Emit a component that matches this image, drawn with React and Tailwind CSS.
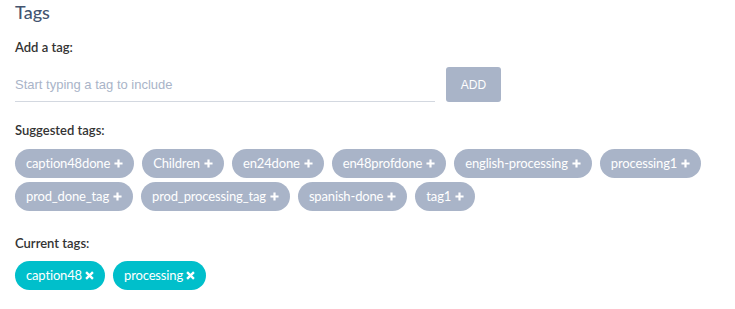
import React, { useState } from 'react';

const suggested = [
  'caption48done', 'Children', 'en24done', 'en48profdone', 'english-processing', 'processing1',
  'prod_done_tag', 'prod_processing_tag', 'spanish-done', 'tag1',
];
const current = ['caption48', 'processing'];

function PlusIcon() {
  return (
    <svg viewBox="0 0 10 10" className="w-[9px] h-[9px] ml-[4px]" fill="none" stroke="currentColor" strokeWidth="2.4">
      <path d="M5 0.5v9M0.5 5h9" />
    </svg>
  );
}

function XIcon() {
  return (
    <svg viewBox="0 0 10 10" className="w-[9px] h-[9px] ml-[3px]" fill="none" stroke="currentColor" strokeWidth="2.6">
      <path d="M1.2 1.2l7.6 7.6M8.8 1.2l-7.6 7.6" />
    </svg>
  );
}

export default function App() {
  const [value, setValue] = useState('');

  return (
    <div className="w-[735px] h-[309px] bg-white px-[15px] pt-0 text-[13px] font-['Lato','Noto_Sans',sans-serif]">
      <h2 className="text-[18px] leading-[24px] font-medium text-[#44546f]">Tags</h2>

      <p className="mt-[14px] text-[13px] leading-[18px] font-semibold text-[#333]">Add a tag:</p>

      {/* Input row */}
      <div className="flex items-center mt-[11px] w-[486px]">
        <input
          value={value}
          onChange={e => setValue(e.target.value)}
          placeholder="Start typing a tag to include"
          className="w-[420px] h-[35px] border-b border-[#d3d8e0] outline-none text-[13px] text-[#333] placeholder:text-[#a9b4c8] font-['Liberation_Sans',sans-serif]"
        />
        <button className="ml-[11px] w-[55px] h-[35px] rounded-[3px] bg-[#a9b4c8] text-white text-[12px] font-['Liberation_Sans',sans-serif]">
          ADD
        </button>
      </div>

      <p className="mt-[19px] text-[13px] leading-[18px] font-semibold text-[#333]">Suggested tags:</p>

      <div className="mt-[10px] flex flex-wrap gap-x-[8px] gap-y-[4px] w-[710px]">
        {suggested.map(t => (
          <span key={t} className="h-[29px] px-[11px] rounded-full bg-[#a9b4c8] text-white text-[13px] tracking-[-0.15px] flex items-center">
            {t}<PlusIcon />
          </span>
        ))}
      </div>

      <p className="mt-[23px] text-[13px] leading-[18px] font-semibold text-[#333]">Current tags:</p>

      <div className="mt-[9px] flex flex-wrap gap-[8px]">
        {current.map(t => (
          <span key={t} className="h-[29px] px-[11px] rounded-full bg-[#00bfcb] text-white text-[13px] tracking-[-0.15px] flex items-center">
            {t}<XIcon />
          </span>
        ))}
      </div>
    </div>
  );
}
